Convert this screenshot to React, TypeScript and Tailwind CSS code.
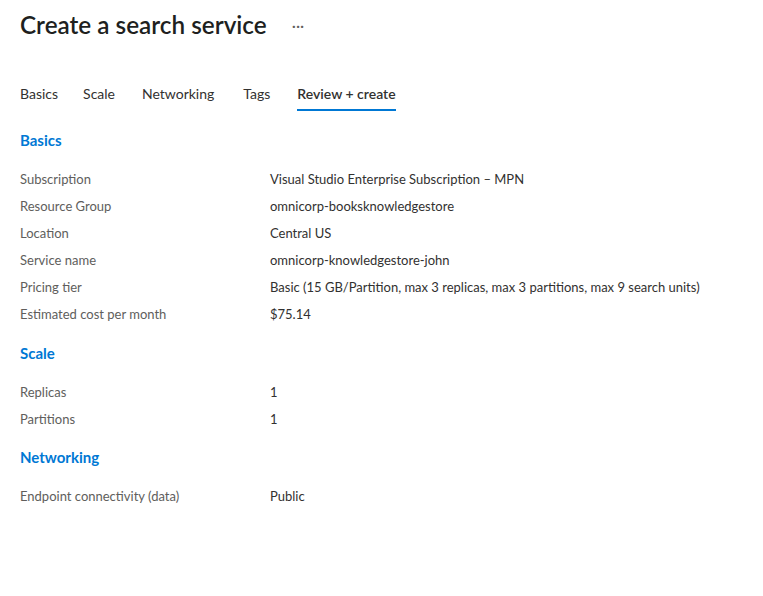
type Row = [string, string];

const sections: { title: string; mt: string; rows: Row[] }[] = [
  {
    title: "Basics",
    mt: "mt-[19px]",
    rows: [
      ["Subscription", "Visual Studio Enterprise Subscription – MPN"],
      ["Resource Group", "omnicorp-booksknowledgestore"],
      ["Location", "Central US"],
      ["Service name", "omnicorp-knowledgestore-john"],
      ["Pricing tier", "Basic (15 GB/Partition, max 3 replicas, max 3 partitions, max 9 search units)"],
      ["Estimated cost per month", "$75.14"],
    ],
  },
  {
    title: "Scale",
    mt: "mt-[15px]",
    rows: [
      ["Replicas", "1"],
      ["Partitions", "1"],
    ],
  },
  {
    title: "Networking",
    mt: "mt-[14px]",
    rows: [["Endpoint connectivity (data)", "Public"]],
  },
];

const tabs: { label: string; ml: string }[] = [
  { label: "Basics", ml: "" },
  { label: "Scale", ml: "ml-[25px]" },
  { label: "Networking", ml: "ml-[27px]" },
  { label: "Tags", ml: "ml-[29px]" },
  { label: "Review + create", ml: "ml-[27px]" },
];

export default function App() {
  return (
    <div className="min-h-[596px] w-[763px] bg-white px-5 font-['Lato',sans-serif]">
      {/* Header */}
      <div className="flex items-center pt-[9px]">
        <h1 className="text-[24.3px] font-semibold leading-[32px] text-[#201f1e]">
          Create a search service
        </h1>
        <span className="ml-[25px] text-[16px] leading-[32px] text-[#605e5c]">···</span>
      </div>

      {/* Tabs */}
      <nav className="mt-[43px] flex text-[14px] leading-[20px] text-[#323130]">
        {tabs.map((t) => (
          <div
            key={t.label}
            className={
              t.ml +
              (t.label === "Review + create"
                ? " border-b-2 border-[#0078d4] pb-[5px] font-semibold"
                : " border-b-2 border-transparent pb-[5px]")
            }
          >
            {t.label}
          </div>
        ))}
      </nav>

      {/* Summary */}
      {sections.map((s) => (
        <section key={s.title} className={s.mt}>
          <h2 className="text-[15px] font-bold leading-[20px] text-[#0078d4]">{s.title}</h2>
          <div className="mt-[16px]">
            {s.rows.map(([k, v]) => (
              <div key={k} className="flex text-[13px] leading-[27px]">
                <div className="w-[250px] shrink-0 text-[#605e5c]">{k}</div>
                <div className="text-[#323130]">{v}</div>
              </div>
            ))}
          </div>
        </section>
      ))}
    </div>
  );
}
